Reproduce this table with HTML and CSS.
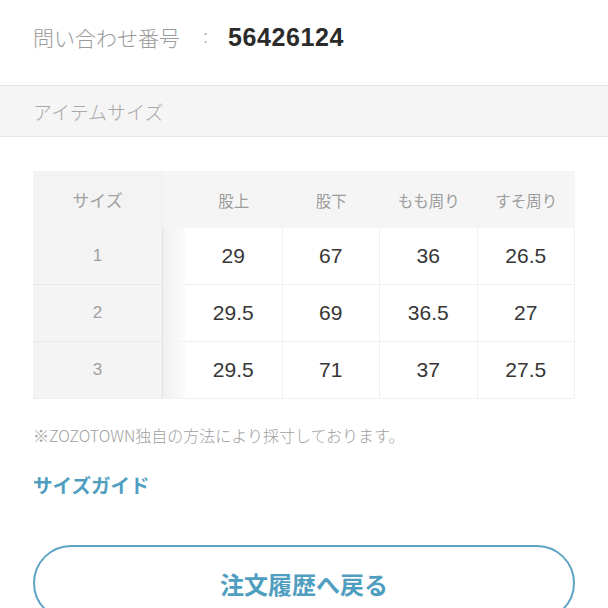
FILE: index.html
```html
<!DOCTYPE html>
<html lang="ja">
<head>
<meta charset="utf-8">
<link rel="stylesheet" href="styles.css">
</head>
<body>
<div class="info-row">
  <span class="info-label">問い合わせ番号</span>
  <span class="info-colon">:</span>
  <span class="info-value">56426124</span>
</div>
<div class="section-head">アイテムサイズ</div>
<div class="size-table">
  <div class="c head first">サイズ</div>
  <div class="c head gap"></div>
  <div class="c head">股上</div>
  <div class="c head">股下</div>
  <div class="c head">もも周り</div>
  <div class="c head">すそ周り</div>

  <div class="c first">1</div>
  <div class="c gap"></div>
  <div class="c val">29</div>
  <div class="c val">67</div>
  <div class="c val">36</div>
  <div class="c val">26.5</div>

  <div class="c first">2</div>
  <div class="c gap"></div>
  <div class="c val">29.5</div>
  <div class="c val">69</div>
  <div class="c val">36.5</div>
  <div class="c val">27</div>

  <div class="c first last">3</div>
  <div class="c gap last"></div>
  <div class="c val last">29.5</div>
  <div class="c val last">71</div>
  <div class="c val last">37</div>
  <div class="c val last">27.5</div>
</div>
<p class="note">※ZOZOTOWN独自の方法により採寸しております。</p>
<a class="guide" href="#">サイズガイド</a>
<div class="btn">注文履歴へ戻る</div>
</body>
</html>
```
FILE: styles.css
```css
html, body {
  margin: 0;
  padding: 0;
  background: #fff;
  font-family: "Liberation Sans", "Noto Sans CJK JP", sans-serif;
  overflow: hidden;
}
.info-row {
  display: flex;
  align-items: center;
  height: 74px;
  padding-left: 33px;
}
.info-label {
  width: 170px;
  font-size: 21px;
  color: #9a9a9a;
  font-family: "Noto Sans CJK JP", sans-serif;
  font-weight: 300;
}
.info-colon {
  width: 25px;
  color: #b0b0b0;
  font-size: 18px;
}
.info-value {
  font-size: 25px;
  font-weight: bold;
  color: #2b2b2b;
  letter-spacing: 0.6px;
}
.section-head {
  margin-top: 11px;
  height: 50px;
  border-top: 1px solid #e6e6e6;
  border-bottom: 1px solid #e6e6e6;
  background: #f5f5f5;
  display: flex;
  align-items: center;
  padding-left: 33px;
  font-family: "Noto Sans CJK JP", sans-serif;
  font-weight: 300;
  font-size: 19px;
  color: #a8a8a8;
}
.size-table {
  margin: 34px 0 0 33px;
  width: 542px;
  display: grid;
  grid-template-columns: 130px 22px repeat(4, 97.5px);
  grid-auto-rows: 57px;
}
.c {
  display: flex;
  align-items: center;
  justify-content: center;
  box-sizing: border-box;
}
.head {
  background: #f5f5f5;
  font-family: "Noto Sans CJK JP", sans-serif;
  font-size: 15.5px;
  color: #9c9c9c;
  font-weight: 400;
}
.head.first {
  background: #f3f3f3;
  border-right: 1px solid #efefef;
}
.first {
  background: #f4f4f4;
  color: #a0a0a0;
  font-size: 17px;
  border-bottom: 1px solid #e9e9e9;
  border-right: 1px solid #e2e2e2;
}
.head.first { border-bottom: none; }
.first.last { border-bottom: 1px solid #ececec; }
.gap {
  background: linear-gradient(to right, #f0f0f0, #fbfbfb);
  border-bottom: 1px solid #f4f4f4;
}
.head.gap {
  background: #f5f5f5;
  border-bottom: none;
}
.val {
  background: #fff;
  font-size: 21px;
  color: #363636;
  border-right: 1px solid #f0f0f0;
  border-bottom: 1px solid #f0f0f0;
}
.note {
  margin: 25px 0 0 33px;
  font-family: "Noto Sans CJK JP", sans-serif;
  font-weight: 300;
  font-size: 16px;
  color: #a0a0a0;
  line-height: 22px;
}
.guide {
  display: block;
  margin: 27px 0 0 33px;
  font-family: "Noto Sans CJK JP", sans-serif;
  font-weight: bold;
  font-size: 19.5px;
  line-height: 24px;
  color: #4f9ec0;
  text-decoration: none;
}
.btn {
  margin: 48px 0 0 33px;
  width: 542px;
  height: 76px;
  box-sizing: border-box;
  border: 2px solid #5ea4c2;
  border-radius: 38px;
  display: flex;
  align-items: center;
  justify-content: center;
  font-family: "Noto Sans CJK JP", sans-serif;
  font-weight: bold;
  font-size: 24px;
  color: #4f9ec0;
}
```
